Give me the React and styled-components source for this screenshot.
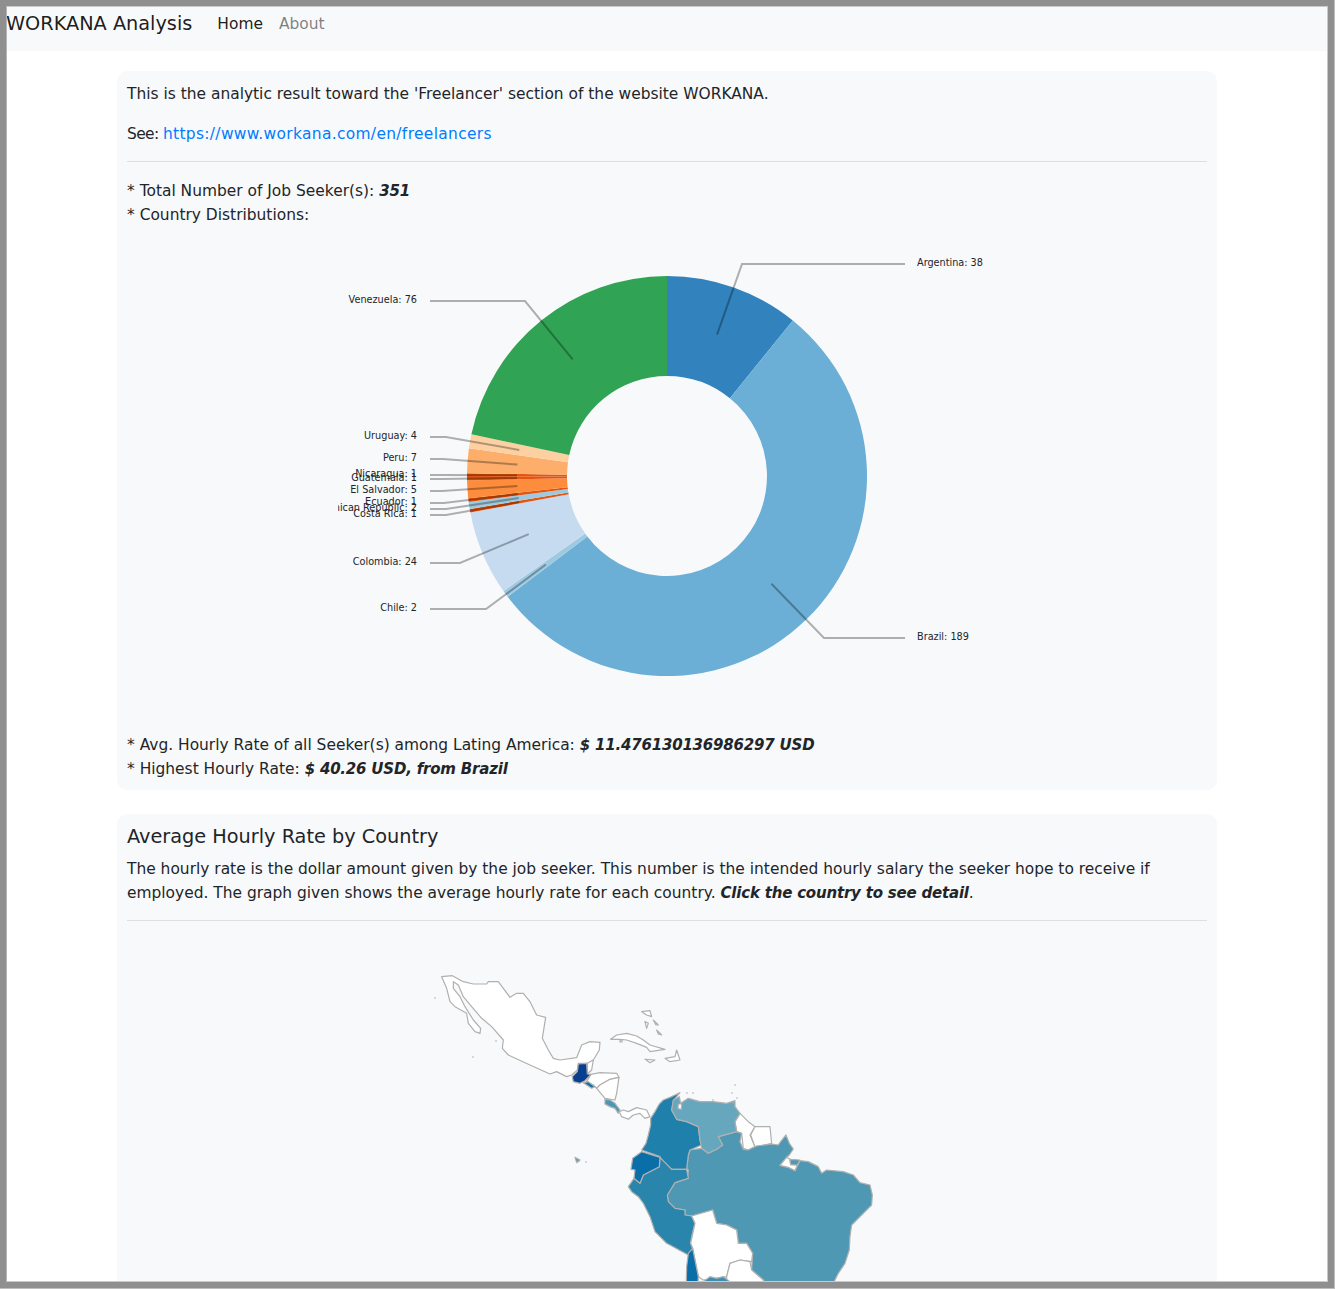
import React from "react";
import styled, { createGlobalStyle } from "styled-components";

const GlobalStyle = createGlobalStyle`
  html, body {
    margin: 0;
    background: #bdbdbd;
  }
  body {
    font-family: "DejaVu Sans", Verdana, sans-serif;
    font-size: 15.45px;
    line-height: 24px;
    color: #212529;
  }
`;

const Frame = styled.div`
  position: relative;
  box-sizing: border-box;
  width: 1334px;
  height: 1288px;
  border: 6px solid #8f8f8f;
  background: #fff;
  overflow: hidden;

  &::after {
    content: "";
    position: absolute;
    inset: 0;
    border: 1px solid #c9c9c9;
    border-left-color: #b5b5b5;
    pointer-events: none;
  }
`;

const Navbar = styled.nav`
  box-sizing: border-box;
  height: 45px;
  padding-bottom: 9px;
  background: #f8f9fa;
  display: flex;
  align-items: center;
`;

const Brand = styled.a`
  font-size: 19.3px;
  color: rgba(0, 0, 0, 0.9);
  margin-right: 25px;
`;

const NavLink = styled.a`
  color: ${(p) => (p.$active ? "rgba(0, 0, 0, 0.9)" : "rgba(0, 0, 0, 0.5)")};
  margin-right: 16px;
`;

const Main = styled.main`
  width: 1100px;
  margin: 20px auto 0;
`;

const Card = styled.section`
  background: #f8f9fa;
  border-radius: 10px;
  padding: 11px 10px 9px;
  margin-bottom: 24px;
`;

const Para = styled.p`
  margin: 0 0 16px;
`;

const Divider = styled.hr`
  border: 0;
  border-top: 1px solid rgba(0, 0, 0, 0.1);
  margin: -1px 0 17px;
`;

const Line = styled.div``;

const Strong = styled.b`
  font-style: italic;
  font-size: 15px;
  letter-spacing: -0.2px;
`;

const SeeLabel = styled.span`
  letter-spacing: -0.6px;
`;

const Link = styled.a`
  color: #007bff;
  letter-spacing: 0.33px;
`;

const Heading = styled.h5`
  margin: 0 0 8px;
  font-size: 19.3px;
  line-height: 24px;
  font-weight: 400;
`;

const ChartWrap = styled.div`
  height: 500px;
  margin: -1px 0 7px;
  display: flex;
  justify-content: center;
`;

const MapWrap = styled.div`
  height: 420px;
  display: flex;
  justify-content: center;
`;

const countries = [
  { name: "Argentina", n: 38, color: "#3182bd", elbow: [742, 264], end: [905, 264], side: "r" },
  { name: "Brazil", n: 189, color: "#6baed6", elbow: [824, 638], end: [905, 638], side: "r" },
  { name: "Chile", n: 2, color: "#9ecae1", elbow: [486, 609], end: [430, 609] },
  { name: "Colombia", n: 24, color: "#c6dbef", elbow: [460, 563], end: [430, 563] },
  { name: "Costa Rica", n: 1, color: "#e6550d", elbow: [446, 515], end: [430, 515] },
  { name: "Dominican Republic", n: 2, color: "#9ecae1", elbow: [446, 509], end: [430, 509] },
  { name: "Ecuador", n: 1, color: "#e6550d", elbow: [444, 503], end: [430, 503] },
  { name: "El Salvador", n: 5, color: "#fd8d3c", elbow: [442, 491], end: [430, 491] },
  { name: "Guatemala", n: 1, color: "#e6550d", elbow: [442, 479], end: [430, 479] },
  { name: "Nicaragua", n: 1, color: "#e6550d", elbow: [442, 475], end: [430, 475] },
  { name: "Peru", n: 7, color: "#fdae6b", elbow: [443, 459], end: [430, 459] },
  { name: "Uruguay", n: 4, color: "#fdd0a2", elbow: [446, 437], end: [430, 437] },
  { name: "Venezuela", n: 76, color: "#31a354", elbow: [525, 301], end: [430, 301] },
];

const CX = 667;
const CY = 476;
const total = countries.reduce((s, c) => s + c.n, 0);

const polar = (r, a) => [CX + r * Math.sin(a), CY - r * Math.cos(a)];

const arcPath = (a0, a1) => {
  const [x0, y0] = polar(200, a0);
  const [x1, y1] = polar(200, a1);
  const [x2, y2] = polar(100, a1);
  const [x3, y3] = polar(100, a0);
  const large = a1 - a0 > Math.PI ? 1 : 0;
  return `M${x0} ${y0}A200 200 0 ${large} 1 ${x1} ${y1}L${x2} ${y2}A100 100 0 ${large} 0 ${x3} ${y3}Z`;
};

const Donut = () => {
  let sum = 0;
  const slices = countries.map((c) => {
    const a0 = (sum / total) * Math.PI * 2;
    sum += c.n;
    const a1 = (sum / total) * Math.PI * 2;
    return { ...c, a0, a1, start: polar(150, (a0 + a1) / 2) };
  });
  return (
    <svg width="658" height="500" viewBox="338 226 658 500">
      {slices.map((s) => (
        <path key={s.name} d={arcPath(s.a0, s.a1)} fill={s.color} />
      ))}
      {slices.map((s) => (
        <polyline
          key={s.name}
          points={`${s.start} ${s.elbow} ${s.end}`}
          fill="none"
          stroke="#000"
          strokeOpacity="0.3"
          strokeWidth="2"
        />
      ))}
      {slices.map((s) => (
        <text
          key={s.name}
          x={s.side === "r" ? 917 : 417}
          y={s.end[1] + 2}
          textAnchor={s.side === "r" ? "start" : "end"}
          fontSize="9.7"
          fill="#212529"
        >
          {s.name}: {s.n}
        </text>
      ))}
    </svg>
  );
};

// outlines traced from the picture, in two local 3x grids
const north = [
  { fill: "#fff", d: "M65 50L97 47 130 65 160 72 200 72 205 65 235 65 250 85 270 112 290 100 310 100 330 125 350 165 377 172 367 235 385 270 400 295 420 300 470 293 485 255 510 245 540 247 538 270 520 300 505 310 475 310 472 330 455 345 440 350 410 335 390 342 330 315 265 285 247 265 250 240 215 200 185 175 155 140 130 110 115 75 100 65 100 85 120 110 135 140 160 180 182 205 180 220 165 215 145 190 140 160 105 140 90 125 80 85Z" },
  { fill: "#fff", d: "M502 310L520 300 515 330 502 342Z" },
  { fill: "#fff", d: "M513 343L540 338 590 340 597 352 570 358 540 375 530 385 520 375 500 365Z" },
  { fill: "#fff", d: "M570 358L597 352 590 400 585 420 555 415 530 385 540 375Z" },
  { fill: "#fff", d: "M598 455L610 450 625 455 650 443 680 450 690 470 675 475 660 460 640 465 625 478 605 470Z" },
  { fill: "#08408f", d: "M475 312L500 310 502 342 513 343 495 362 480 370 460 365 457 350 472 335Z" },
  { fill: "#0f6fa5", d: "M490 368L505 365 525 380 515 385Z" },
  { fill: "#4a97b4", d: "M555 418L570 420 585 430 600 450 595 460 585 445 570 440 555 432Z" },
  { fill: "#fff", d: "M572 238L590 225 620 220 650 228 670 240 690 255 735 268 690 275 680 262 650 250 620 240 600 238Z" },
  { fill: "#fff", d: "M675 298L705 300 690 308Z" },
  { fill: "#fff", d: "M735 295L765 290 770 270 780 300 750 305Z" },
  { fill: "#fff", d: "M665 155L690 152 695 170 680 165Z" },
  { fill: "#fff", d: "M675 185L685 190 680 205Z" },
  { fill: "#fff", d: "M700 180L715 195 708 195Z" },
  { fill: "#fff", d: "M710 210L725 225 715 222Z" },
  { fill: "#fff", d: "M600 240h6v6h-6Z" },
];

const south = [
  { fill: "#fff", d: "M540 100L525 125 530 155 545 160 550 205 565 210 585 200 570 165 585 140 565 125Z" },
  { fill: "#fff", d: "M585 140L630 140 635 190 600 198 585 200 572 165Z" },
  { fill: "#4f98b3", d: "M530 155L545 160 540 185 550 208 565 210 590 198 635 192 655 195 662 185 678 165 688 190 700 207 688 225 680 232 660 256 685 262 705 272 720 242 745 245 775 260 785 280 800 270 850 275 880 285 900 308 930 315 937 345 935 375 910 400 875 435 870 470 868 510 855 550 835 580 825 600 810 640 640 640 610 600 575 570 578 520 560 490 535 490 530 450 500 435 470 430 458 390 395 408 375 405 375 390 345 385 325 365 322 345 345 308 383 295 385 270 380 265 385 225 390 210 425 205 445 220 470 208 488 195 475 170Z" },
  { fill: "#1f80ab", d: "M360 38L345 45 330 52 310 60 298 72 285 95 272 115 272 135 265 165 258 190 245 210 300 230 305 240 335 268 380 268 385 225 390 210 425 195 420 180 415 140 380 125 350 118 335 90 340 62Z" },
  { fill: "#67a7bd", d: "M340 60L335 90 350 118 380 125 415 140 420 180 425 205 445 220 470 208 488 195 475 170 530 155 525 125 540 100 525 80 525 62 500 70 460 65 420 65 385 55 362 70 358 50Z" },
  { fill: "#2a85ad", d: "M300 232L335 268 380 268 385 295 345 308 322 345 325 365 345 385 375 390 375 405 395 408 405 430 395 470 392 490 398 505 385 525 320 490 285 455 270 410 250 370 235 350 215 335 205 320 222 295 240 310 250 285 298 260Z" },
  { fill: "#0a6fa8", d: "M245 215L300 232 298 260 250 285 240 310 222 295 225 270 213 268 218 235Z" },
  { fill: "#fff", d: "M395 408L458 390 470 430 500 435 530 450 535 490 560 490 578 520 575 545 540 540 510 550 500 590 430 600 415 590 398 505 392 490 405 430Z" },
  { fill: "#fff", d: "M510 550L540 540 570 545 575 570 610 600 610 640 500 640 500 590Z" },
  { fill: "#0a6fa8", d: "M385 520L398 505 415 590 412 640 378 640 380 560Z" },
  { fill: "#3a8fb3", d: "M430 605L450 590 470 595 490 590 510 605 550 640 430 640Z" },
  { fill: "#4f98b3", d: "M45 232L60 240 50 248Z" },
  { fill: "#fff", d: "M660 256L680 232 690 238 692 254 712 255 705 272 685 262Z" },
  { fill: "#4f98b3", d: "M690 238L720 240 712 255 692 254Z" },
  { fill: "#fff", d: "M355 72L365 72 364 88 354 86Z" },
];

const dots = [
  [435, 998], [496, 1041], [473, 1057],
  [687, 1093], [693, 1093], [713, 1100], [735, 1085], [732, 1093], [737, 1098], [733, 1103],
  [579, 1161], [586, 1162],
];

const LatinMap = () => (
  <svg width="1080" height="420" viewBox="127 938 1080 420">
    <g transform="translate(420 960) scale(0.3333)">
      {north.map((c) => (
        <path key={c.d} d={c.d} fill={c.fill} stroke="#b0b0b0" strokeWidth="3.6" strokeLinejoin="round" />
      ))}
    </g>
    <g transform="translate(560 1080) scale(0.3333)">
      {south.map((c) => (
        <path key={c.d} d={c.d} fill={c.fill} stroke="#b0b0b0" strokeWidth="3.6" strokeLinejoin="round" />
      ))}
    </g>
    {dots.map(([x, y]) => (
      <circle key={`${x}-${y}`} cx={x} cy={y} r="0.8" fill="#aaa" />
    ))}
  </svg>
);

export default function App() {
  return (
    <>
      <GlobalStyle />
      <Frame>
        <Navbar>
          <Brand>WORKANA Analysis</Brand>
          <NavLink $active>Home</NavLink>
          <NavLink>About</NavLink>
        </Navbar>
        <Main>
          <Card>
            <Para>This is the analytic result toward the 'Freelancer' section of the website WORKANA.</Para>
            <Para>
              <SeeLabel>See: </SeeLabel>
              <Link>https://www.workana.com/en/freelancers</Link>
            </Para>
            <Divider />
            <Line>
              * Total Number of Job Seeker(s): <Strong>351</Strong>
            </Line>
            <Line>* Country Distributions:</Line>
            <ChartWrap>
              <Donut />
            </ChartWrap>
            <Line>
              * Avg. Hourly Rate of all Seeker(s) among Lating America: <Strong>$ 11.476130136986297 USD</Strong>
            </Line>
            <Line>
              * Highest Hourly Rate: <Strong>$ 40.26 USD, from Brazil</Strong>
            </Line>
          </Card>
          <Card>
            <Heading>Average Hourly Rate by Country</Heading>
            <Para>
              The hourly rate is the dollar amount given by the job seeker. This number is the intended hourly salary the
              seeker hope to receive if employed. The graph given shows the average hourly rate for each country.{" "}
              <Strong>Click the country to see detail</Strong>.
            </Para>
            <Divider />
            <MapWrap>
              <LatinMap />
            </MapWrap>
          </Card>
        </Main>
      </Frame>
    </>
  );
}
